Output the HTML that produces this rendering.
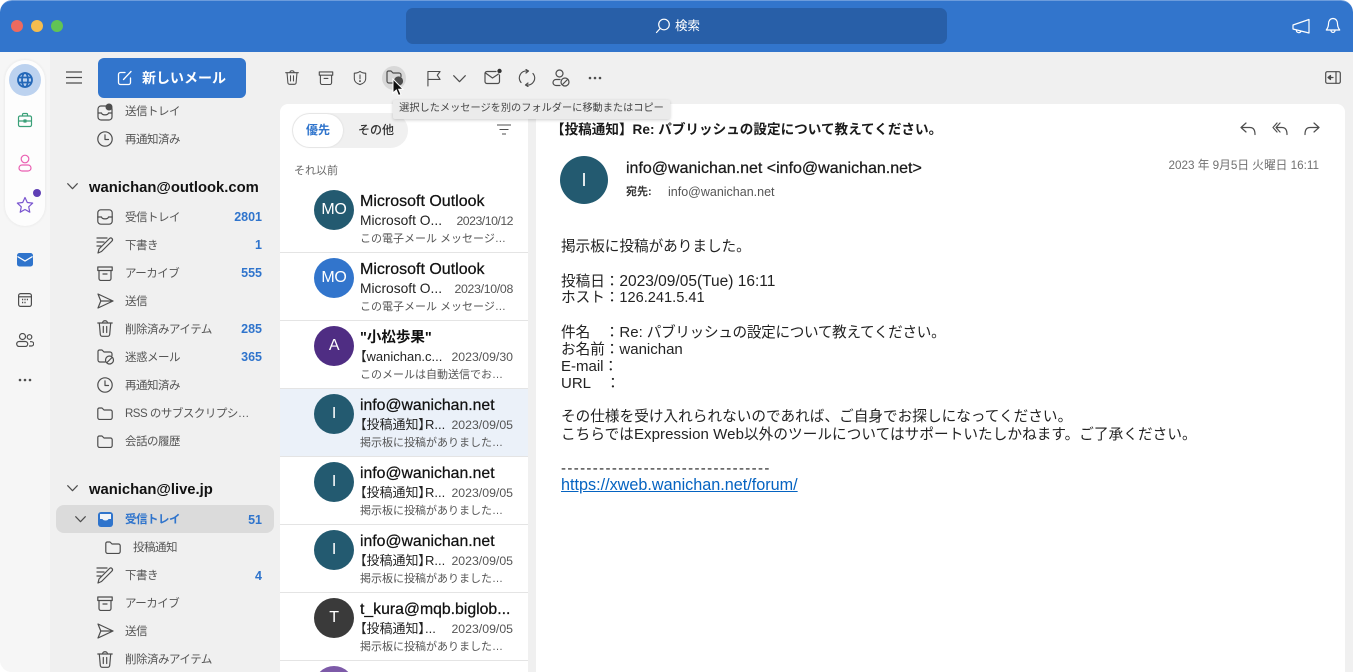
<!DOCTYPE html>
<html lang="ja"><head><meta charset="utf-8"><title>Outlook</title>
<style>
html,body{margin:0;padding:0;background:#fff;overflow:hidden;width:1353px;height:672px}
#a{position:relative;width:1353px;height:672px;overflow:hidden;background:#f0f0f0;font-family:"Liberation Sans","Noto Sans CJK JP",sans-serif;color:#1a1a1a;border-radius:12px 12px 0 12px}
#a div,#a svg{position:absolute}
.t{white-space:nowrap;line-height:20px;height:20px}
.nav{font-size:11.5px;letter-spacing:-.5px;color:#555}
.ct{font-size:12.5px;font-weight:bold;color:#2f74cc;right:1091px;text-align:right}
.acct{font-size:14.8px;font-weight:bold;color:#111}
.i{fill:none;stroke:#4d4d4d;stroke-width:1.2;stroke-linecap:round;stroke-linejoin:round}
.av{border-radius:50%;color:#fff;text-align:center;width:40px;height:40px;line-height:40px;font-size:16px;letter-spacing:-.3px;left:314px}
.n{left:360px;font-size:15.8px;color:#111;-webkit-text-stroke:.25px #111}
.s{left:360px;font-size:13.8px;color:#222;font-feature-settings:"palt"}
.d{right:840px;font-size:12.3px;color:#555}
.p{left:360px;font-size:11px;color:#555}
.sep{left:280px;width:248px;height:1px;background:#e4e4e4}
.b{left:561px;font-size:14.6px;color:#222;line-height:17px;height:17px;white-space:nowrap}
.b span{font-size:15px}
</style></head><body><div id="a">
<div style="left:0;top:0;width:1353px;height:52px;background:#3275cc;border-top:1px solid #6c9cdc;box-sizing:border-box;border-radius:12px 12px 0 0"></div>
<div style="left:11px;top:20px;width:12px;height:12px;border-radius:50%;background:#ee6a5f"></div>
<div style="left:31px;top:20px;width:12px;height:12px;border-radius:50%;background:#f5bd4f"></div>
<div style="left:51px;top:20px;width:12px;height:12px;border-radius:50%;background:#61c454"></div>
<div style="left:406px;top:8px;width:541px;height:36px;background:#285fa8;border-radius:7px"></div>
<svg style="left:655px;top:18px" width="16" height="16" viewBox="0 0 16 16" fill="none" stroke="#fff" stroke-width="1.2" stroke-linecap="round"><circle cx="9" cy="6.500" r="5.300"/><path d="M5.200 10.400L1.500 14.500"/></svg>
<div class="t" style="left:675px;top:16px;font-size:12.500px;color:#fff">検索</div>
<svg style="left:1292px;top:17px" width="18" height="18" viewBox="0 0 18 18" fill="none" stroke="#fff" stroke-width="1.2" stroke-linejoin="round"><path d="M1 8L17 2.500v13.500L1 12z"/><path d="M4.500 13c-.5 2.800 3.500 3.600 4.500 1.300"/></svg>
<svg style="left:1325px;top:17px" width="16" height="18" viewBox="0 0 16 18" fill="none" stroke="#fff" stroke-width="1.200" stroke-linejoin="round"><path d="M8 1.500c-3 0-4.500 2.500-4.500 5.200 0 3.500-1.500 5.300-2.200 6.300h13.400c-.7-1-2.200-2.800-2.200-6.300 0-2.700-1.500-5.200-4.500-5.200z"/><path d="M6 13.500c0 2.500 4 2.500 4 0"/></svg>

<div style="left:0;top:52px;width:50px;height:620px;background:#f6f6f6"></div>
<div style="left:5px;top:60px;width:40px;height:166px;background:#fdfdfd;border-radius:20px;box-shadow:0 0 3px rgba(0,0,0,.08)"></div>
<div style="left:9px;top:64px;width:32px;height:32px;border-radius:50%;background:#bcd2ef"></div>
<svg style="left:17px;top:72px" width="16" height="16" viewBox="0 0 16 16" fill="none" stroke="#2468b8" stroke-width="1.800"><circle cx="8" cy="8" r="7"/><ellipse cx="8" cy="8" rx="3" ry="7"/><path d="M1 5.500h14M1 10.500h14"/></svg>
<svg style="left:17px;top:112px" width="16" height="16" viewBox="0 0 16 16" fill="none" stroke="#3aa078" stroke-width="1.200" stroke-linejoin="round"><rect x="1.500" y="4" width="13" height="10.500" rx="1.500"/><path d="M5.500 4V2.500a1 1 0 011-1h3a1 1 0 011 1V4M1.500 9h13"/><rect x="7" y="8" width="2" height="2" fill="#3aa078"/></svg>
<svg style="left:17px;top:154px" width="16" height="18" viewBox="0 0 16 18" fill="none" stroke="#ea5fb2" stroke-width="1.200"><circle cx="8" cy="5" r="3.800"/><rect x="2" y="11" width="12" height="6" rx="3"/></svg>
<svg style="left:16px;top:196px" width="18" height="18" viewBox="0 0 18 18" fill="none" stroke="#7a55cf" stroke-width="1.200" stroke-linejoin="round"><path d="M9 1.500l2.300 5 5.400.6-4 3.700 1.100 5.400L9 13.500l-4.800 2.700 1.100-5.400-4-3.700 5.400-.6z"/></svg>
<div style="left:33px;top:189px;width:8px;height:8px;border-radius:50%;background:#5f3fb5"></div>
<svg style="left:17px;top:253px" width="16" height="14" viewBox="0 0 16 14"><rect width="16" height="13.500" rx="2.500" fill="#2f74cc"/><path d="M.5 3.500L8 8l7.500-4.500" fill="none" stroke="#fff" stroke-width="1.300"/></svg>
<svg style="left:18px;top:293px" width="14" height="14" viewBox="0 0 14 14" fill="none" stroke="#4d4d4d" stroke-width="1.200"><rect x=".6" y=".6" width="12.800" height="12.800" rx="2"/><path d="M.6 3.800h12.800"/><path d="M4 6.500h1.200M6.400 6.500h1.200M8.800 6.500h1.200M4 9.500h1.200M6.400 9.500h1.200" stroke-width="1.500"/></svg>
<svg style="left:16px;top:333px" width="18" height="14" viewBox="0 0 18 14" fill="none" stroke="#4d4d4d" stroke-width="1.200"><circle cx="6.500" cy="3.500" r="3"/><circle cx="13.500" cy="4" r="2.300"/><rect x=".7" y="8.500" width="11" height="5" rx="2.500"/><path d="M14 8.700h1.500a2 2 0 010 4.300H13"/></svg>
<svg style="left:18px;top:378px" width="14" height="4" viewBox="0 0 14 4" fill="#4d4d4d"><circle cx="2" cy="2" r="1.300"/><circle cx="7" cy="2" r="1.300"/><circle cx="12" cy="2" r="1.300"/></svg>

<svg style="left:66px;top:71px" width="16" height="13" viewBox="0 0 16 13" stroke="#4d4d4d" stroke-width="1.200"><path d="M0 1h16M0 6.500h16M0 12h16"/></svg>
<div style="left:98px;top:58px;width:148px;height:40px;background:#3275cc;border-radius:6px"></div>
<svg style="left:117px;top:70px" width="16" height="16" viewBox="0 0 16 16" fill="none" stroke="#fff" stroke-width="1.300" stroke-linecap="round"><path d="M8 2.500H3.500a2 2 0 00-2 2v8a2 2 0 002 2h8a2 2 0 002-2V8"/><path d="M6.500 9.500L14 1.500"/></svg>
<div class="t" style="left:142px;top:68px;font-size:14px;font-weight:bold;color:#fff">新しいメール</div>

<!-- sidebar -->
<svg style="left:97px;top:103px" width="17" height="18" viewBox="0 0 17 18" class="i"><rect x="1" y="3" width="14" height="14" rx="3"/><path d="M1 10h3.500c.5 2.500 6.500 2.500 7 0H15"/><circle cx="12" cy="4" r="3.500" fill="#4d4d4d" stroke="none"/></svg>
<div class="t nav" style="left:125px;top:102px">送信トレイ</div>
<svg style="left:97px;top:131px" width="16" height="16" viewBox="0 0 16 16" class="i"><circle cx="8" cy="8" r="7.200"/><path d="M8 3.800V8.500h3.500"/></svg>
<div class="t nav" style="left:125px;top:130px">再通知済み</div>
<svg style="left:67px;top:183px" width="11" height="7" viewBox="0 0 11 7" class="i"><path d="M.7.700l4.800 5 4.800-5"/></svg>
<div class="t acct" style="left:89px;top:178px">wanichan@outlook.com</div>

<svg style="left:97px;top:209px" width="16" height="16" viewBox="0 0 16 16" class="i"><rect x=".8" y=".8" width="14.400" height="14.400" rx="3"/><path d="M.8 8h3.700c.5 2.500 6.500 2.500 7 0h3.700"/></svg>
<div class="t nav" style="left:125px;top:208px">受信トレイ</div><div class="t ct" style="top:207px">2801</div>
<svg style="left:96px;top:236px" width="18" height="18" viewBox="0 0 18 18" class="i"><path d="M1 2h10M1 6h7M1 10h4M2 17l1-4L13.500 2.500c.8-.8 1.800-.8 2.500 0s.7 1.700 0 2.500L5.500 15.500z"/></svg>
<div class="t nav" style="left:125px;top:236px">下書き</div><div class="t ct" style="top:235px">1</div>
<svg style="left:97px;top:266px" width="16" height="15" viewBox="0 0 16 15" class="i"><path d="M.8 1h14.400v3.500H.8zM2 4.500v8a2 2 0 002 2h8a2 2 0 002-2v-8M6 8h4"/></svg>
<div class="t nav" style="left:125px;top:264px">アーカイブ</div><div class="t ct" style="top:263px">555</div>
<svg style="left:97px;top:293px" width="17" height="16" viewBox="0 0 17 16" class="i"><path d="M1 1l15 7-15 7 2.800-7zM3.800 8H16"/></svg>
<div class="t nav" style="left:125px;top:292px">送信</div>
<svg style="left:97px;top:320px" width="16" height="17" viewBox="0 0 16 17" class="i"><path d="M.8 3h14.400M5.500 3c0-3 5-3 5 0M2.300 3l1 11.500c.1 1 1 1.800 2 1.800h5.400c1 0 1.900-.8 2-1.800l1-11.500M6.300 6.500v6M9.700 6.500v6"/></svg>
<div class="t nav" style="left:125px;top:320px">削除済みアイテム</div><div class="t ct" style="top:319px">285</div>
<svg style="left:97px;top:349px" width="18" height="16" viewBox="0 0 18 16" class="i"><path d="M8 13H3a2 2 0 01-2-2V2.500A1.500 1.500 0 012.500 1H5l2 2h6a2 2 0 012 2v1.500"/><circle cx="12.500" cy="11" r="4"/><path d="M10 13.500l5-5"/></svg>
<div class="t nav" style="left:125px;top:348px">迷惑メール</div><div class="t ct" style="top:347px">365</div>
<svg style="left:97px;top:377px" width="16" height="16" viewBox="0 0 16 16" class="i"><circle cx="8" cy="8" r="7.200"/><path d="M8 3.800V8.500h3.500"/></svg>
<div class="t nav" style="left:125px;top:376px">再通知済み</div>
<svg style="left:97px;top:407px" width="16" height="13" viewBox="0 0 16 13" class="i"><path d="M.8 2.500A1.500 1.500 0 012.300 1H5l2 2h6.500a1.700 1.700 0 011.700 1.700V10.500a2 2 0 01-2 2H2.800a2 2 0 01-2-2z"/></svg>
<div class="t nav" style="left:125px;top:404px">RSS のサブスクリプシ…</div>
<svg style="left:97px;top:435px" width="16" height="13" viewBox="0 0 16 13" class="i"><path d="M.8 2.500A1.500 1.500 0 012.300 1H5l2 2h6.500a1.700 1.700 0 011.700 1.700V10.500a2 2 0 01-2 2H2.800a2 2 0 01-2-2z"/></svg>
<div class="t nav" style="left:125px;top:432px">会話の履歴</div>

<svg style="left:67px;top:485px" width="11" height="7" viewBox="0 0 11 7" class="i"><path d="M.7.700l4.800 5 4.800-5"/></svg>
<div class="t acct" style="left:89px;top:480px">wanichan@live.jp</div>
<div style="left:56px;top:505px;width:218px;height:28px;background:#dbdbdb;border-radius:8px"></div>
<svg style="left:75px;top:516px" width="11" height="7" viewBox="0 0 11 7" class="i"><path d="M.7.700l4.800 5 4.800-5"/></svg>
<svg style="left:98px;top:512px" width="15" height="15" viewBox="0 0 15 15"><rect width="15" height="15" rx="3" fill="#2f74cc"/><path d="M2 2h11v5h-2.500c-.5 2-5.500 2-6 0H2z" fill="#f1f4f9"/></svg>
<div class="t nav" style="left:125px;top:510px;color:#2f74cc;font-weight:bold">受信トレイ</div><div class="t ct" style="top:510px">51</div>
<svg style="left:105px;top:541px" width="16" height="13" viewBox="0 0 16 13" class="i"><path d="M.8 2.500A1.500 1.500 0 012.300 1H5l2 2h6.500a1.700 1.700 0 011.700 1.700V10.500a2 2 0 01-2 2H2.800a2 2 0 01-2-2z"/></svg>
<div class="t nav" style="left:133px;top:538px">投稿通知</div>
<svg style="left:96px;top:566px" width="18" height="18" viewBox="0 0 18 18" class="i"><path d="M1 2h10M1 6h7M1 10h4M2 17l1-4L13.500 2.500c.8-.8 1.800-.8 2.500 0s.7 1.700 0 2.500L5.500 15.500z"/></svg>
<div class="t nav" style="left:125px;top:566px">下書き</div><div class="t ct" style="top:566px">4</div>
<svg style="left:97px;top:596px" width="16" height="15" viewBox="0 0 16 15" class="i"><path d="M.8 1h14.400v3.500H.8zM2 4.500v8a2 2 0 002 2h8a2 2 0 002-2v-8M6 8h4"/></svg>
<div class="t nav" style="left:125px;top:594px">アーカイブ</div>
<svg style="left:97px;top:623px" width="17" height="16" viewBox="0 0 17 16" class="i"><path d="M1 1l15 7-15 7 2.800-7zM3.800 8H16"/></svg>
<div class="t nav" style="left:125px;top:622px">送信</div>
<svg style="left:97px;top:651px" width="16" height="17" viewBox="0 0 16 17" class="i"><path d="M.8 3h14.400M5.500 3c0-3 5-3 5 0M2.300 3l1 11.500c.1 1 1 1.800 2 1.800h5.400c1 0 1.900-.8 2-1.800l1-11.500M6.300 6.500v6M9.700 6.500v6"/></svg>
<div class="t nav" style="left:125px;top:650px">削除済みアイテム</div>

<!-- toolbar -->
<svg style="left:285px;top:70px" width="14" height="15" viewBox="0 0 16 17" class="i"><path d="M.8 3h14.400M5.500 3c0-3 5-3 5 0M2.300 3l1 11.500c.1 1 1 1.800 2 1.800h5.400c1 0 1.900-.8 2-1.800l1-11.500M6.300 6.500v6M9.700 6.500v6"/></svg>
<svg style="left:318px;top:71px" width="16" height="14" viewBox="0 0 16 15" class="i"><path d="M.8 1h14.400v3.500H.8zM2 4.500v8a2 2 0 002 2h8a2 2 0 002-2v-8M6 8h4"/></svg>
<svg style="left:353px;top:70px" width="14" height="16" viewBox="0 0 16 17" class="i"><path d="M8 1c2 1.500 4 2 6.500 2v6c0 3.500-3 6-6.500 7-3.500-1-6.500-3.500-6.500-7V3C4 3 6 2.500 8 1zM8 5v4.500"/><circle cx="8" cy="12" r=".5"/></svg>
<div style="left:382px;top:66px;width:24px;height:24px;border-radius:50%;background:#d8d8d8"></div>
<svg style="left:386px;top:70px" width="18" height="16" viewBox="0 0 18 16" class="i"><path d="M8 13H3a2 2 0 01-2-2V2.500A1.500 1.500 0 012.500 1H5l2 2h6a2 2 0 012 2v1.500"/><circle cx="12.500" cy="11" r="4" fill="#4d4d4d"/></svg>
<svg style="left:392px;top:78px" width="12" height="19" viewBox="0 0 12 19"><path d="M1 1v14l3.300-3 2.200 5.500 2.500-1-2.300-5.300h4.300z" fill="#111" stroke="#fff" stroke-width="1"/></svg>
<svg style="left:427px;top:70px" width="14" height="17" viewBox="0 0 15 17" class="i"><path d="M1 16.500V1h13l-3 4 3 4.500H1"/></svg>
<svg style="left:453px;top:75px" width="13" height="8" viewBox="0 0 13 8" class="i"><path d="M.7.700l5.800 6 5.800-6"/></svg>
<svg style="left:484px;top:68px" width="19" height="17" viewBox="0 0 19 17" class="i"><path d="M15.500 7v6.500a2 2 0 01-2 2H3a2 2 0 01-2-2V5.500a2 2 0 012-2h9M1.500 5l7 5 6-4"/><circle cx="15.500" cy="3" r="2.200" fill="#333" stroke="none"/></svg>
<svg style="left:518px;top:69px" width="18" height="18" viewBox="0 0 18 18" class="i"><path d="M3 13.500A7 7 0 019 2h1M8 .5L10.500 2 8 4M15 4.500A7 7 0 019 16H8M10 14l-2.500 2 2.500 1.500"/></svg>
<svg style="left:552px;top:69px" width="18" height="18" viewBox="0 0 18 18" class="i"><circle cx="7.500" cy="4.500" r="3.500"/><path d="M8 10.500H4a3 3 0 000 6h4"/><circle cx="13" cy="13" r="4"/><path d="M10.500 15.500l5-5"/></svg>
<svg style="left:588px;top:76px" width="14" height="4" viewBox="0 0 14 4" fill="#4d4d4d"><circle cx="2" cy="2" r="1.300"/><circle cx="7" cy="2" r="1.300"/><circle cx="12" cy="2" r="1.300"/></svg>
<svg style="left:1325px;top:71px" width="16" height="13" viewBox="0 0 16 13" class="i"><rect x=".7" y=".7" width="14.600" height="11.600" rx="1.500"/><path d="M11 .7v11.600M8 6.500H3.500"/><path d="M5.500 4.500l-2.500 2 2.500 2z" fill="#4d4d4d"/></svg>

<!-- list -->
<div style="left:280px;top:104px;width:248px;height:568px;background:#fff;border-radius:8px 0 0 0"></div>
<div style="left:292px;top:113px;width:116px;height:35px;background:#f0f0f0;border-radius:18px"></div>
<div style="left:293px;top:114px;width:50px;height:33px;background:#fff;border-radius:17px;box-shadow:0 0 2px rgba(0,0,0,.12)"></div>
<div class="t" style="left:306px;top:120px;font-size:12px;font-weight:bold;color:#2f74cc">優先</div>
<div class="t" style="left:358px;top:120px;font-size:12px;font-weight:500;color:#333">その他</div>
<svg style="left:497px;top:124px" width="14" height="11" viewBox="0 0 14 11" stroke="#4d4d4d" stroke-width="1.100"><path d="M0 1h14M2.500 5.500h9M5 10h4"/></svg>
<div class="t" style="left:294px;top:161px;font-size:11px;color:#666">それ以前</div>

<div class="av" style="top:190px;background:#235a70">MO</div><div class="t n" style="top:192px;font-size:16px">Microsoft Outlook</div><div class="t s" style="top:211px">Microsoft O...</div><div class="t d" style="top:211px;letter-spacing:-.5px">2023/10/12</div><div class="t p" style="top:229px">この電子メール メッセージ…</div><div class="sep" style="top:252px"></div>
<div class="av" style="top:258px;background:#3275cc">MO</div><div class="t n" style="top:260px;font-size:16px">Microsoft Outlook</div><div class="t s" style="top:279px">Microsoft O...</div><div class="t d" style="top:279px;letter-spacing:-.3px">2023/10/08</div><div class="t p" style="top:297px">この電子メール メッセージ…</div><div class="sep" style="top:320px"></div>
<div class="av" style="top:326px;background:#4f2d83">A</div><div class="t n" style="top:328px;font-weight:bold;font-size:14.500px;-webkit-text-stroke:0">"小松歩果"</div><div class="t s" style="top:347px;font-size:13px">【wanichan.c...</div><div class="t d" style="top:347px">2023/09/30</div><div class="t p" style="top:365px">このメールは自動送信でお…</div><div class="sep" style="top:388px"></div>
<div style="left:280px;top:389px;width:248px;height:67px;background:#ebf1f9"></div>
<div class="av" style="top:394px;background:#235a70">I</div><div class="t n" style="top:396px">info@wanichan.net</div><div class="t s" style="top:415px;font-size:13px">【投稿通知】R...</div><div class="t d" style="top:415px">2023/09/05</div><div class="t p" style="top:433px">掲示板に投稿がありました…</div><div class="sep" style="top:456px"></div>
<div class="av" style="top:462px;background:#235a70">I</div><div class="t n" style="top:464px">info@wanichan.net</div><div class="t s" style="top:483px;font-size:13px">【投稿通知】R...</div><div class="t d" style="top:483px">2023/09/05</div><div class="t p" style="top:501px">掲示板に投稿がありました…</div><div class="sep" style="top:524px"></div>
<div class="av" style="top:530px;background:#235a70">I</div><div class="t n" style="top:532px">info@wanichan.net</div><div class="t s" style="top:551px;font-size:13px">【投稿通知】R...</div><div class="t d" style="top:551px">2023/09/05</div><div class="t p" style="top:569px">掲示板に投稿がありました…</div><div class="sep" style="top:592px"></div>
<div class="av" style="top:598px;background:#3a3a3a">T</div><div class="t n" style="top:600px">t_kura@mqb.biglob...</div><div class="t s" style="top:619px;font-size:13px">【投稿通知】...</div><div class="t d" style="top:619px">2023/09/05</div><div class="t p" style="top:637px">掲示板に投稿がありました…</div><div class="sep" style="top:660px"></div>
<svg style="left:314px;top:666px" width="40" height="6" viewBox="0 0 40 6"><circle cx="20" cy="20" r="20" fill="#7d5aa8"/></svg>

<!-- reading pane -->
<div style="left:536px;top:104px;width:809px;height:568px;background:#fff;border-radius:8px 8px 0 0"></div>
<div class="t" style="left:551px;top:120px;font-size:13.600px;font-weight:bold;color:#1a1a1a">【投稿通知】Re: パブリッシュの設定について教えてください。</div>
<svg style="left:1240px;top:122px" width="16" height="14" viewBox="0 0 16 14" class="i"><path d="M6 1L1 5.500 6 10M1 5.500h9c3 0 5 2 5 7"/></svg>
<svg style="left:1272px;top:122px" width="16" height="14" viewBox="0 0 16 14" class="i"><path d="M5 1L1 5.500 5 10M8 1L4 5.500 8 10M4 5.500h6c3 0 5 2 5 7"/></svg>
<svg style="left:1304px;top:122px" width="16" height="14" viewBox="0 0 16 14" class="i"><path d="M10 1l5 4.500L10 10M15 5.500H6c-3 0-5 2-5 7"/></svg>
<div style="left:560px;top:156px;width:48px;height:48px;border-radius:50%;background:#235a70;color:#fff;text-align:center;line-height:48px;font-size:18px">I</div>
<div class="t" style="left:626px;top:159px;font-size:16px;color:#1a1a1a;-webkit-text-stroke:.25px #1a1a1a">info@wanichan.net &lt;info@wanichan.net&gt;</div>
<div class="t" style="left:626px;top:182px;font-size:11px;font-weight:bold;color:#333">宛先:</div>
<div class="t" style="left:668px;top:182px;font-size:12.500px;color:#555">info@wanichan.net</div>
<div class="t" style="right:34px;top:156px;font-size:11.700px;color:#707070">2023 年 9月5日 火曜日 16:11</div>

<div class="b" style="top:239px">掲示板に投稿がありました。</div>
<div class="b" style="top:273px">投稿日：<span style="font-size:15.500px">2023/09/05(Tue) 16:11</span></div>
<div class="b" style="top:290px">ホスト：<span style="font-size:14.600px">126.241.5.41</span></div>
<div class="b" style="top:324px">件名　：<span>Re:</span> <span style="font-size:14.600px;letter-spacing:-.3px">パブリッシュの設定について教えてください。</span></div>
<div class="b" style="top:341px">お名前：<span>wanichan</span></div>
<div class="b" style="top:358px"><span>E-mail</span>：</div>
<div class="b" style="top:375px"><span>URL</span>　：</div>
<div class="b" style="top:409px;letter-spacing:.05px">その仕様を受け入れられないのであれば、ご自身でお探しになってください。</div>
<div class="b" style="top:426px;letter-spacing:.08px">こちらでは<span>Expression Web</span>以外のツールについてはサポートいたしかねます。ご了承ください。</div>
<div class="b" style="top:460px;font-size:15px;letter-spacing:1.360px">---------------------------------</div>
<div class="b" style="top:477px;font-size:16.200px;color:#0563c1;text-decoration:underline">https://xweb.wanichan.net/forum/</div>

<!-- tooltip -->
<div class="t" style="left:393px;top:100px;width:277px;height:19px;line-height:18px;background:#ebebeb;box-shadow:0 1px 3px rgba(0,0,0,.2);font-size:10.200px;color:#444;text-align:center;border-radius:2px">選択したメッセージを別のフォルダーに移動またはコピー</div>
</div></body></html>
